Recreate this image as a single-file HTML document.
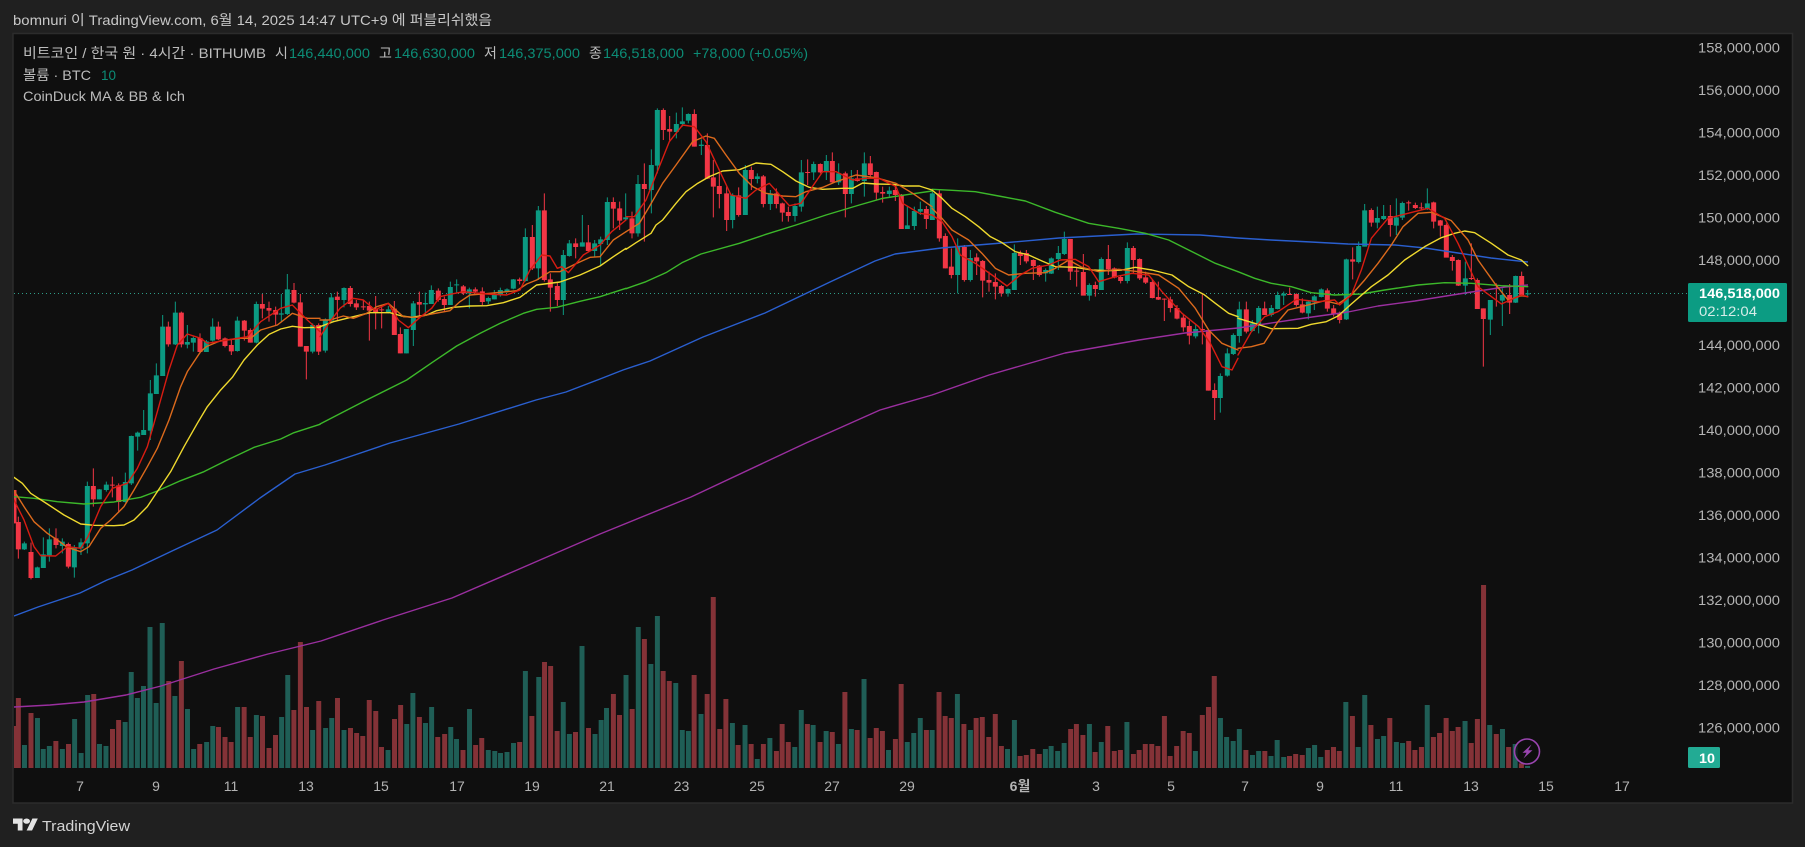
<!DOCTYPE html>
<html lang="ko">
<head>
<meta charset="utf-8">
<title>bomnuri TradingView chart</title>
<style>
html,body{margin:0;padding:0;background:#202020;width:1805px;height:847px;overflow:hidden}
svg{display:block}
text{font-family:"Liberation Sans","Noto Sans CJK KR",sans-serif;font-size:14px}
.gw{stroke:#0b9a82;stroke-width:3;fill:none}
.gb{stroke:#0b9a82;stroke-width:15;fill:none}
.rw{stroke:#f23645;stroke-width:3;fill:none}
.rb{stroke:#f23645;stroke-width:15;fill:none}
.l{fill:none;stroke-width:4.2;stroke-linejoin:round;stroke-linecap:round}
.y{stroke:#efd92e}.o{stroke:#dc6a1c}.d{stroke:#d81c12}.n{stroke:#3cb82a}
.p{fill:#b4b4b4}
.t{fill:#b4b4b4;text-anchor:middle}
.lg{fill:#bdbdbd}
.v{fill:#0c8c76}
</style>
</head>
<body>
<svg width="1805" height="847" viewBox="0 0 1805 847" xmlns="http://www.w3.org/2000/svg">
<defs><clipPath id="c"><rect x="14" y="34" width="1778" height="768"/></clipPath></defs>
<rect width="1805" height="847" fill="#202020"/>
<rect x="13" y="33.5" width="1779.5" height="769.5" fill="#0f0f0f" stroke="#2c2c2c" stroke-width="1.5"/>
<text x="13" y="25" fill="#c8c8c8" textLength="479" lengthAdjust="spacingAndGlyphs">bomnuri 이 TradingView.com, 6월 14, 2025 14:47 UTC+9 에 퍼블리쉬했음</text>

<g clip-path="url(#c)">
<!-- volume -->
<g transform="translate(0 570) scale(.38265 .33333)" fill="none" stroke-width="13">
<path stroke="#1f5e56" d="M64 525V594M98 444V594M113 537V594M129 528V594M163 537V594M195 447V594M212 549V594M229 375V594M260 522V594M277 528V594M327 456V594M343 306V594M359 384V594M375 348V594M392 171V594M408 399V594M424 159V594M457 378V594M490 417V594M506 537V594M540 516V594M556 468V594M621 411V594M670 435V594M736 441V594M752 315V594M817 480V594M851 474V594M867 444V594M899 480V594M1014 540V594M1063 462V594M1079 369V594M1112 459V594M1128 411V594M1178 471V594M1193 507V594M1227 417V594M1276 540V594M1293 543V594M1308 549V594M1325 546V594M1342 519V594M1373 303V594M1408 321V594M1472 396V594M1488 492V594M1521 228V594M1555 492V594"/>
<path stroke="#843237" d="M36 468V594M48 384V594M81 429V594M146 513V594M179 522V594M245 372V594M294 477V594M310 450V594M441 333V594M474 273V594M522 522V594M571 471V594M588 501V594M604 516V594M638 411V594M654 501V594M686 438V594M703 534V594M720 495V594M768 420V594M785 216V594M801 411V594M833 393V594M882 384V594M916 474V594M932 489V594M948 498V594M965 390V594M982 423V594M997 531V594M1031 447V594M1047 405V594M1096 441V594M1144 501V594M1162 492V594M1210 540V594M1243 525V594M1259 504V594M1358 516V594M1390 438V594M1423 276V594M1439 288V594M1456 483V594M1504 486V594M1538 474V594"/>
</g>
<g transform="translate(600 570) scale(.38265 .33333)" fill="none" stroke-width="13">
<path stroke="#1f5e56" d="M3 450V594M17 414V594M68 315V594M100 171V594M133 282V594M150 138V594M198 339V594M215 480V594M231 483V594M264 432V594M346 459V594M379 465V594M411 567V594M444 504V594M509 531V594M526 420V594M557 465V594M591 483V594M623 522V594M657 477V594M690 327V594M754 540V594M803 516V594M820 489V594M837 444V594M868 480V594M934 372V594M968 480V594M1065 537V594M1083 450V594M1164 537V594M1179 528V594M1196 543V594M1213 519V594M1279 462V594M1310 516V594M1377 456V594M1556 543V594"/>
<path stroke="#843237" d="M35 372V594M51 435V594M84 417V594M116 207V594M165 303V594M181 333V594M246 315V594M280 372V594M296 81V594M313 477V594M329 387V594M361 525V594M395 522V594M427 522V594M461 543V594M476 462V594M492 516V594M542 462V594M575 516V594M607 486V594M640 366V594M672 480V594M706 504V594M722 474V594M738 483V594M772 507V594M787 342V594M853 480V594M886 366V594M902 438V594M918 444V594M951 462V594M983 444V594M999 441V594M1016 501V594M1033 432V594M1049 528V594M1098 558V594M1114 555V594M1131 537V594M1148 552V594M1230 477V594M1245 462V594M1262 495V594M1294 546V594M1327 468V594M1344 543V594M1360 540V594M1394 552V594M1409 540V594M1425 522V594M1442 522V594M1458 528V594M1475 438V594M1490 558V594M1507 528V594M1524 483V594M1540 489V594"/>
</g>
<g transform="translate(1200 570) scale(.3858 .33333)" fill="none" stroke-width="13">
<path stroke="#1f5e56" d="M53 444V594M69 501V594M86 513V594M102 477V594M136 555V594M152 543V594M184 558V594M200 510V594M217 561V594M281 534V594M297 525V594M313 561V594M378 396V594M410 531V594M427 375V594M460 507V594M476 498V594M509 516V594M525 519V594M589 405V594M687 453V594M751 465V594M784 477V594M817 522V594M849 588V594"/>
<path stroke="#843237" d="M6 435V594M22 411V594M37 318V594M119 540V594M168 543V594M232 558V594M248 552V594M265 555V594M330 540V594M346 531V594M361 543V594M395 438V594M443 465V594M492 444V594M541 513V594M557 540V594M574 531V594M605 501V594M621 489V594M638 444V594M654 483V594M669 471V594M703 519V594M719 447V594M735 45V594M768 492V594M800 531V594M833 580V594"/>
</g>

<!-- last price line -->
<line x1="14" y1="293.5" x2="1688" y2="293.5" stroke="#2f9c88" stroke-width="1" stroke-dasharray="1 3"/>

<!-- candles zoom 8 -->
<g transform="translate(14 290) scale(.33333)">
<path class="gw" d="M31 755V780M70 830V864M88 742V834M106 715V815M145 745V790M181 765V863M201 745V795M220 575V790M256 597V628M277 575V605M334 548V638M352 437V585M371 425V482M389 360V435M409 270V450M427 220V312M446 75V258M484 35V165M520 105V175M538 140V185M577 150V186M596 85V155M670 80V185M727 35V160M802 12V95M820 -48V75M896 100V190"/>
<path class="gb" d="M31 760V778M70 832V864M88 793V834M106 748V796M145 755V768M181 772V832M201 757V775M220 588V760M256 598V628M277 584V600M334 576V636M352 438V580M371 428V440M389 420V435M409 310V422M427 256V312M446 110V258M484 68V163M520 156V164M538 144V158M577 154V186M596 110V152M670 92V183M727 42V158M802 70V74M820 -2V72M896 105V185"/>
<path class="rw" d="M0 600V700M13 680V806M51 758V868M126 715V775M163 758V835M238 535V650M295 560V622M314 580V668M463 95V170M502 65V172M558 130V190M613 95V150M633 142V172M652 150V195M691 90V152M709 115V158M745 12V85M765 35V95M785 50V105M840 -21V40M859 12V170M877 168V268M914 100V195"/>
<path class="rb" d="M0 600V700M13 696V778M51 786V864M126 745V765M163 762V830M238 588V628M295 584V587M314 586V636M463 110V163M502 68V163M558 144V186M613 110V148M633 145V168M652 165V184M691 92V122M709 120V158M745 42V56M765 54V62M785 60V74M840 0V38M859 37V170M877 168V185M914 105V185"/>
</g>
<!-- candles zoom 9 -->
<g transform="translate(320 100) scale(.33333)">
<path class="gw" d="M16 655V758M34 580V665M72 562V622M205 618V640M259 687V760M280 603V738M316 578V645M334 556V612M391 545V615M410 538V580M448 563V625M505 590V612M523 570V598M541 563V590M561 565V578M580 537V568M616 385V545M655 318V540M730 450V645M748 420V470M787 345V440M824 420V470M842 410V498M862 292V435"/>
<path class="gb" d="M16 658V752M34 592V662M72 564V600M205 628V636M259 687V760M280 610V690M316 609V613M334 570V612M391 561V615M410 553V556M448 568V580M505 594V604M523 582V598M541 570V584M561 568V576M580 538V566M616 411V543M655 331V505M730 465V600M748 430V468M787 427V440M824 430V453M842 418V432M862 306V420"/>
<path class="rw" d="M52 575V660M91 558V620M109 600V630M130 600V630M148 605V722M167 588V688M185 615V685M223 603V705M241 682V760M298 575V655M355 565V605M373 590V635M430 555V585M466 562V578M487 562V615M599 533V553M637 375V510M673 280V545M691 520V635M712 545V618M767 415V475M805 375V455M880 292V385M899 305V390"/>
<path class="rb" d="M52 590V600M91 564V612M109 610V622M130 619V622M148 618V632M167 625V637M185 628V631M223 626V705M241 702V760M298 606V614M355 572V600M373 597V615M430 559V580M466 568V575M487 574V606M599 538V543M637 411V505M673 331V540M691 538V563M712 558V600M767 430V441M805 427V453M880 306V326M899 325V362"/>
</g>
<!-- candles zoom 10 -->
<g transform="translate(626 100) scale(.33333)">
<path class="gw" d="M-1 280V360M36 225V410M76 148V340M94 25V220M151 38V115M169 22V80M187 40V70M226 118V165M320 280V385M358 195V345M394 220V250M433 270V330M507 310V365M526 180V335M563 185V240M601 165V240M638 190V255M676 210V310M715 157V290M790 260V290M844 320V387M865 320V390M883 305V345"/>
<path class="gb" d="M-1 352V358M36 252V400M76 195V270M94 30V197M151 72V96M169 64V72M187 42V62M226 134V138M320 286V360M358 210V345M394 229V237M433 280V312M507 318V348M526 217V320M563 192V217M601 183V216M638 220V247M676 235V282M715 190V243M790 272V282M844 376V387M865 333V378M883 327V335"/>
<path class="rw" d="M18 335V415M55 190V425M112 25V120M131 48V122M205 28V140M244 100V237M262 180V352M280 215V325M302 260V393M338 262V350M376 200V270M412 225V322M451 265V325M469 308V365M487 320V365M545 178V255M583 190V220M619 157V250M658 215V352M694 210V245M733 168V235M751 215V298M770 260V308M808 255V303M826 282V387M901 318V387"/>
<path class="rb" d="M18 355V400M55 252V267M112 30V90M131 87V95M205 42V140M244 135V236M262 232V260M280 258V282M302 280V360M338 286V345M376 210V237M412 229V312M451 280V312M469 310V338M487 336V348M545 216V219M583 192V217M619 183V247M658 220V282M694 235V243M733 190V225M751 216V278M770 276V281M808 270V285M826 284V387M901 327V357"/>
</g>
<!-- candles zoom 11 -->
<g transform="translate(932 180) scale(.33333)">
<path class="gw" d="M1 30V120M77 175V340M115 210V305M228 325V350M247 193V330M341 265V305M358 232V282M379 198V270M397 155V225M472 310V362M508 232V330M586 187V310M791 432V475M865 580V698M886 505V590M904 460V525"/>
<path class="gb" d="M1 40V120M77 198V285M115 234V300M228 327V340M247 219V330M341 270V280M358 235V281M379 219V237M397 177V222M472 315V347M508 237V330M586 204V303M791 447V469M865 588V654M886 520V587M904 465V522"/>
<path class="rw" d="M22 30V185M40 160V265M58 205V295M97 195V305M134 220V285M152 240V352M171 275V335M190 280V358M208 315V350M265 212V255M283 210V250M304 238V300M322 255V290M415 177V300M434 260V320M454 222V345M490 305V350M529 195V285M547 262V295M566 285V310M604 198V280M623 235V300M641 275V312M661 300V355M679 305V360M697 355V423M715 350V397M735 375V418M754 405V455M772 422V493M811 343V493M829 450V632M848 610V720"/>
<path class="rb" d="M22 40V175M40 168V265M58 260V285M97 201V300M134 232V244M152 243V302M171 300V308M190 306V320M208 318V340M265 219V228M283 219V244M304 240V258M322 257V285M415 177V275M434 272V275M454 276V347M490 315V327M529 237V268M547 265V293M566 291V303M604 204V240M623 237V295M641 292V308M661 306V354M679 351V359M697 356V359M715 358V384M735 384V416M754 413V442M772 438V467M811 447V450M829 450V632M848 630V654"/>
</g>
<!-- candles zoom 12 -->
<g transform="translate(1238 180) scale(.33333)">
<path class="gw" d="M4 365V488M43 420V455M62 378V460M100 375V410M119 335V388M137 335V375M211 360V418M229 345V390M250 325V352M325 236V420M362 185V250M380 72V200M418 80V145M437 75V120M475 55V165M493 65V120M568 25V90M682 245V345M757 360V465M793 325V438M833 287V369M869 330V352"/>
<path class="gb" d="M4 388V468M43 430V453M62 384V432M100 384V405M119 345V387M137 341V347M211 365V400M229 349V367M250 328V351M325 238V418M362 198V246M380 91V200M418 114V128M437 108V117M475 112V137M493 69V113M568 70V87M682 295V317M757 360V419M793 345V362M833 288V368M869 340V343"/>
<path class="rw" d="M25 365V460M80 365V405M155 323V345M175 340V380M193 355V400M268 325V395M287 375V410M305 395V430M344 202V298M400 85V140M457 75V170M512 62V92M532 68V87M550 68V90M587 65V145M607 120V170M625 130V205M643 225V272M661 238V318M700 190V300M718 295V387M736 385V560M775 310V380M815 312V402M851 275V350"/>
<path class="rb" d="M25 388V455M80 385V405M155 342V345M175 342V375M193 373V398M268 331V386M287 385V403M305 402V420M344 238V245M400 90V128M457 108V135M512 67V70M532 75V84M550 82V85M587 67V125M607 121V137M625 135V233M643 231V243M661 240V317M700 294V297M718 300V387M736 385V417M815 345V368M851 288V346"/>
</g>

<!-- long MAs -->
<g fill="none" stroke-width="1.4" stroke-linejoin="round">
<polyline stroke="#2a5fcf" points="14,616 38,607 80,593 107,580 132,570 172,551 217,530 260,498 295,474 325,465 390,443 459,424 536,400 566,392 600,379 623,370 650,361 703,337 765,313 830,282 875,261 895,254 941,248 1002,243 1059,238 1136,234 1200,235 1238,238 1271,240 1311,242 1348,244 1395,245 1425,248 1458,253 1491,258 1528,262"/>
<polyline stroke="#9a2f9f" points="14,707 50,705 84,702 126,695 161,686 214,669 268,654 321,641 383,620 452,598 517,570 540,560 600,534 691,497 806,443 880,410 932,395 989,375 1065,353 1139,340 1185,333 1238,328 1258,325 1305,318 1348,312 1378,306 1415,301 1465,293 1505,287 1528,285"/>
</g>

<!-- MAs zoom 8 -->
<g transform="translate(14 290) scale(.33333)">
<polyline class="l n" points="0,620 60,625 130,635 210,642 300,636 380,622 430,603 500,572 570,545 640,510 720,472 800,447 840,428 918,403"/>
<polyline class="l y" points="0,562 25,580 50,610 100,642 150,675 200,702 240,706 300,707 330,705 360,690 400,650 430,605 470,545 510,470 550,400 580,350 620,300 655,262 690,210 730,165 765,133 800,117 835,109 870,113 918,112"/>
<polyline class="l o" points="0,602 30,650 60,695 100,730 130,750 160,772 200,785 225,770 260,715 290,690 330,650 360,600 400,530 430,475 465,390 500,290 520,245 560,185 577,170 620,152 680,145 710,145 740,120 790,105 835,70 880,85 918,85"/>
<polyline class="l d" points="0,630 30,690 60,770 80,797 125,798 160,770 200,775 222,740 260,650 295,595 340,580 370,535 400,470 430,365 465,240 490,165 520,132 560,145 580,160 640,150 700,140 740,95 800,55 835,45 880,90 918,125"/>
</g>
<!-- MAs zoom 9 -->
<g transform="translate(320 100) scale(.33333)">
<polyline class="l n" points="0,972 130,905 260,840 340,785 410,738 480,700 540,670 610,640 650,628 710,622 780,604 840,590 918,565"/>
<polyline class="l y" points="0,680 40,665 100,650 150,638 210,638 245,648 275,652 320,645 350,632 400,622 450,618 500,617 550,608 600,592 650,555 720,546 780,525 840,498 880,470 918,445"/>
<polyline class="l o" points="0,660 30,660 70,648 100,655 140,640 170,620 205,610 250,650 290,652 330,643 390,632 420,605 450,585 510,580 590,572 620,552 650,540 690,515 720,515 770,490 810,472 840,470 880,420 918,395"/>
<polyline class="l d" points="0,710 30,665 60,625 100,595 130,600 165,630 205,610 235,660 265,683 300,652 335,625 360,590 390,583 430,575 500,582 560,585 600,570 630,510 665,465 690,468 712,505 725,500 745,518 790,465 840,435 875,395 918,360"/>
</g>
<!-- MAs zoom 10 -->
<g transform="translate(626 100) scale(.33333)">
<polyline class="l n" points="0,566 60,545 120,518 170,487 225,462 340,430 420,403 510,375 600,345 700,315 770,295 850,283 918,273"/>
<polyline class="l y" points="0,448 30,428 75,400 90,375 110,360 150,310 180,275 215,250 250,230 290,213 340,209 390,189 435,193 470,215 510,243 550,262 590,268 650,265 680,265 710,249 750,252 800,253 835,258 880,258 918,270"/>
<polyline class="l o" points="0,395 40,370 70,320 110,250 150,195 200,125 240,108 265,115 300,165 340,220 380,260 420,280 470,288 510,290 540,275 590,262 630,245 690,225 750,233 810,250 860,280 918,320"/>
<polyline class="l d" points="0,350 25,350 60,300 90,225 130,125 170,75 205,80 240,125 275,200 315,285 360,295 390,270 430,250 490,317 525,310 590,215 630,215 680,240 720,235 760,235 810,260 830,310 880,340 918,345"/>
</g>
<!-- MAs zoom 11 -->
<g transform="translate(932 180) scale(.33333)">
<polyline class="l n" points="0,28 60,31 130,35 200,48 280,63 370,97 470,130 560,145 640,160 710,180 800,225 850,250 918,275"/>
<polyline class="l y" points="0,30 30,55 60,85 100,110 140,140 175,170 210,188 250,215 290,225 330,243 370,260 430,262 480,270 530,272 570,270 610,262 660,270 720,285 770,320 815,343 850,370 890,400 918,410"/>
<polyline class="l o" points="0,85 30,115 60,150 110,180 150,220 190,265 230,285 280,280 340,278 370,265 410,240 450,262 500,275 560,268 620,275 680,285 740,325 790,385 830,450 870,490 918,510"/>
<polyline class="l d" points="0,105 30,125 60,170 85,225 130,250 180,285 225,318 265,285 300,265 350,255 385,240 430,238 470,260 500,305 550,290 600,280 650,285 690,335 750,400 800,440 835,490 870,560 900,570 918,535"/>
</g>
<!-- MAs zoom 12 -->
<g transform="translate(1238 180) scale(.33333)">
<polyline class="l n" points="0,275 50,295 100,310 160,320 220,338 290,345 370,342 440,330 540,315 620,308 700,310 790,317 869,320"/>
<polyline class="l y" points="0,415 50,430 100,446 180,445 220,433 265,425 300,408 340,372 400,320 450,285 500,240 560,200 610,173 650,160 680,153 710,158 760,190 810,225 850,240 869,257"/>
<polyline class="l o" points="0,505 40,500 78,490 120,425 150,390 190,380 230,370 260,362 300,372 340,345 380,300 420,250 460,195 495,140 540,100 580,97 640,122 690,180 720,240 770,310 810,360 850,347 869,350"/>
<polyline class="l d" points="0,525 40,455 80,410 120,395 175,358 240,365 290,360 305,375 340,345 370,270 400,175 450,115 510,100 570,85 620,115 660,190 720,320 790,372 850,345 869,350"/>
</g>

<!-- lightning -->
<circle cx="1527" cy="751.5" r="12.5" fill="#0f0f0f" fill-opacity=".75" stroke="#9a45b0" stroke-width="1.6"/>
<path d="M1531.5 744.5L1522.5 752.8H1526.6L1523.5 758.5L1532.5 750.2H1528.2Z" fill="#9a45b0"/>
</g>

<!-- legend -->
<text class="lg" x="23" y="58" textLength="243" lengthAdjust="spacingAndGlyphs">비트코인 / 한국 원 · 4시간 · BITHUMB</text>
<text class="lg" x="275" y="58">시</text>
<text class="v" x="289" y="58" textLength="81" lengthAdjust="spacingAndGlyphs">146,440,000</text>
<text class="lg" x="379" y="58">고</text>
<text class="v" x="394" y="58" textLength="81" lengthAdjust="spacingAndGlyphs">146,630,000</text>
<text class="lg" x="484" y="58">저</text>
<text class="v" x="499" y="58" textLength="81" lengthAdjust="spacingAndGlyphs">146,375,000</text>
<text class="lg" x="589" y="58">종</text>
<text class="v" x="603" y="58" textLength="81" lengthAdjust="spacingAndGlyphs">146,518,000</text>
<text class="v" x="693" y="58" textLength="115" lengthAdjust="spacingAndGlyphs">+78,000 (+0.05%)</text>
<text class="lg" x="23" y="80" textLength="68" lengthAdjust="spacingAndGlyphs">볼륨 · BTC</text>
<text class="v" x="101" y="80" textLength="15" lengthAdjust="spacingAndGlyphs">10</text>
<text class="lg" x="23" y="101" textLength="162" lengthAdjust="spacingAndGlyphs">CoinDuck MA &amp; BB &amp; Ich</text>

<!-- price axis -->
<g class="pa">
<text class="p" x="1698" y="52.5" textLength="82" lengthAdjust="spacingAndGlyphs">158,000,000</text>
<text class="p" x="1698" y="95" textLength="82" lengthAdjust="spacingAndGlyphs">156,000,000</text>
<text class="p" x="1698" y="137.5" textLength="82" lengthAdjust="spacingAndGlyphs">154,000,000</text>
<text class="p" x="1698" y="180" textLength="82" lengthAdjust="spacingAndGlyphs">152,000,000</text>
<text class="p" x="1698" y="222.5" textLength="82" lengthAdjust="spacingAndGlyphs">150,000,000</text>
<text class="p" x="1698" y="265" textLength="82" lengthAdjust="spacingAndGlyphs">148,000,000</text>
<text class="p" x="1698" y="350" textLength="82" lengthAdjust="spacingAndGlyphs">144,000,000</text>
<text class="p" x="1698" y="392.5" textLength="82" lengthAdjust="spacingAndGlyphs">142,000,000</text>
<text class="p" x="1698" y="435" textLength="82" lengthAdjust="spacingAndGlyphs">140,000,000</text>
<text class="p" x="1698" y="477.5" textLength="82" lengthAdjust="spacingAndGlyphs">138,000,000</text>
<text class="p" x="1698" y="520" textLength="82" lengthAdjust="spacingAndGlyphs">136,000,000</text>
<text class="p" x="1698" y="562.5" textLength="82" lengthAdjust="spacingAndGlyphs">134,000,000</text>
<text class="p" x="1698" y="605" textLength="82" lengthAdjust="spacingAndGlyphs">132,000,000</text>
<text class="p" x="1698" y="647.5" textLength="82" lengthAdjust="spacingAndGlyphs">130,000,000</text>
<text class="p" x="1698" y="690" textLength="82" lengthAdjust="spacingAndGlyphs">128,000,000</text>
<text class="p" x="1698" y="732.5" textLength="82" lengthAdjust="spacingAndGlyphs">126,000,000</text>
</g>

<!-- price tag -->
<rect x="1688" y="283" width="99" height="39" rx="1.5" fill="#0c9c83"/>
<text x="1699" y="298" fill="#fff" font-weight="bold" textLength="81" lengthAdjust="spacingAndGlyphs">146,518,000</text>
<text x="1699" y="316" fill="#d6ece8" textLength="58" lengthAdjust="spacingAndGlyphs">02:12:04</text>
<rect x="1688" y="747" width="32" height="21" rx="1.5" fill="#22ab94"/>
<text x="1699" y="763" fill="#fff" font-weight="bold" textLength="16" lengthAdjust="spacingAndGlyphs">10</text>

<!-- time axis -->
<g>
<text class="t" x="80" y="791">7</text>
<text class="t" x="156" y="791">9</text>
<text class="t" x="231" y="791">11</text>
<text class="t" x="306" y="791">13</text>
<text class="t" x="381" y="791">15</text>
<text class="t" x="457" y="791">17</text>
<text class="t" x="532" y="791">19</text>
<text class="t" x="607" y="791">21</text>
<text class="t" x="681.5" y="791">23</text>
<text class="t" x="757" y="791">25</text>
<text class="t" x="832" y="791">27</text>
<text class="t" x="907" y="791">29</text>
<text class="t" x="1020" y="791" font-weight="bold">6월</text>
<text class="t" x="1096" y="791">3</text>
<text class="t" x="1171" y="791">5</text>
<text class="t" x="1245" y="791">7</text>
<text class="t" x="1320" y="791">9</text>
<text class="t" x="1396" y="791">11</text>
<text class="t" x="1471" y="791">13</text>
<text class="t" x="1546" y="791">15</text>
<text class="t" x="1622" y="791">17</text>
</g>

<!-- footer logo -->
<g transform="translate(13 818) scale(.68 .52)" fill="#e4e4e4">
<path d="M14 24H7V11H0V1h14v23zM28 24h-8l8.5-23h8L28 24z"/>
<circle cx="20" cy="6" r="5"/>
</g>
<text x="42" y="831" fill="#d4d4d4" style="font-size:15px" textLength="88" lengthAdjust="spacingAndGlyphs">TradingView</text>
</svg>
</body>
</html>
